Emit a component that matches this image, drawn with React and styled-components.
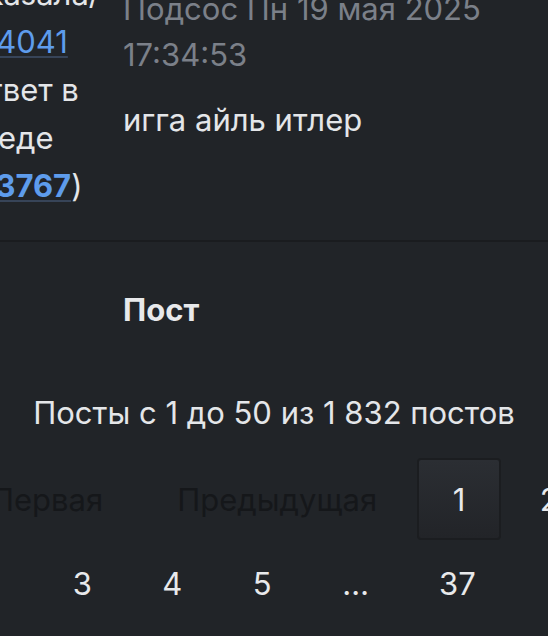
import React from "react"
import styled, { createGlobalStyle } from "styled-components"

const GlobalStyle = createGlobalStyle`
  html, body {
    margin: 0;
    padding: 0;
    background: #212428;
  }
  body {
    font-family: Inter, "Noto Sans", sans-serif;
    color: #e4e6e9;
    -webkit-font-smoothing: antialiased;
  }
`

const Page = styled.div`
  width: 548px;
  height: 636px;
  overflow: hidden;
  background: #212428;
`

const PostRow = styled.div`
  display: grid;
  grid-template-columns: 118px 1fr;
  column-gap: 41px;
  margin-left: -36px;
  margin-top: -30px;
  padding-bottom: 30px;
  border-bottom: 2px solid #1a1c1f;
`

const AuthorCol = styled.div`
  font-size: 31px;
  line-height: 48px;
  white-space: nowrap;
`

const Line = styled.div``

const RefLink = styled.a`
  color: #5e9cec;
  font-weight: ${p => (p.$bold ? 700 : 400)};
  text-decoration: underline;
  text-decoration-color: rgba(70, 90, 120, 0.6);
  text-decoration-thickness: 2px;
  text-underline-offset: 3px;
`

const BodyCol = styled.div`
  padding-top: 16px;
`

const Meta = styled.div`
  font-size: 31px;
  line-height: 46px;
  color: #7b8089;
`

const Message = styled.div`
  margin-top: 18px;
  font-size: 31px;
  line-height: 48px;
  color: #e4e6e9;
`

const HeadRow = styled.div`
  padding: 45px 0 0 123px;
`

const HeadTitle = styled.div`
  font-size: 31px;
  line-height: 46px;
  font-weight: 700;
  color: #e8e9eb;
`

const Summary = styled.div`
  margin-top: 57px;
  text-align: center;
  font-size: 31px;
  line-height: 46px;
  color: #e4e6e9;
  white-space: nowrap;
`

const Pager = styled.nav`
  margin-top: 22px;
  display: flex;
  flex-direction: column;
  row-gap: 2px;
`

const PagerRow = styled.div`
  display: flex;
  justify-content: center;
  column-gap: 6px;
`

const PageItem = styled.span`
  flex-shrink: 0;
  box-sizing: border-box;
  height: 82px;
  min-width: 84px;
  padding: 0 ${p => (p.$label ? 32 : 30)}px;
  display: flex;
  align-items: center;
  justify-content: center;
  font-size: 31px;
  white-space: nowrap;
  border-radius: 4px;
  border: 2px solid ${p => (p.$active ? "#1b1d20" : "transparent")};
  background: ${p =>
    p.$active ? "linear-gradient(#2b2e33, #222428)" : "transparent"};
  color: ${p => (p.$disabled ? "#15171a" : "#e8e9eb")};
`

export default function App() {
  return (
    <Page>
      <GlobalStyle />
      <PostRow>
        <AuthorCol>
          <Line>Сказала/</Line>
          <Line>
            <RefLink href="#">#14041</RefLink>
          </Line>
          <Line>Ответ в</Line>
          <Line>треде</Line>
          <Line>
            (<RefLink href="#" $bold>#3767</RefLink>)
          </Line>
        </AuthorCol>
        <BodyCol>
          <Meta>Подсос Пн 19 мая 2025 17:34:53</Meta>
          <Message>игга айль итлер</Message>
        </BodyCol>
      </PostRow>
      <HeadRow>
        <HeadTitle>Пост</HeadTitle>
      </HeadRow>
      <Summary>Посты с 1 до 50 из 1 832 постов</Summary>
      <Pager>
        <PagerRow>
          <PageItem $label $disabled>Первая</PageItem>
          <PageItem $label $disabled>Предыдущая</PageItem>
          <PageItem $active>1</PageItem>
          <PageItem>2</PageItem>
        </PagerRow>
        <PagerRow>
          <PageItem>3</PageItem>
          <PageItem>4</PageItem>
          <PageItem>5</PageItem>
          <PageItem>…</PageItem>
          <PageItem>37</PageItem>
        </PagerRow>
      </Pager>
    </Page>
  )
}
